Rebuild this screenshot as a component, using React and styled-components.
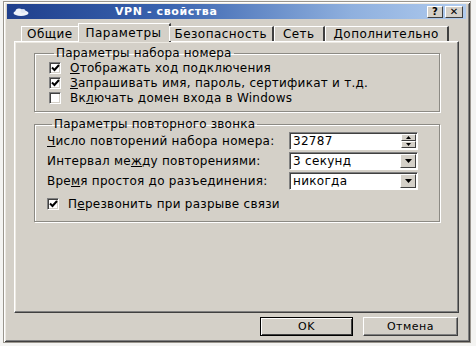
import React from "react";
import styled, { createGlobalStyle } from "styled-components";

const Global = createGlobalStyle`
  html, body { margin: 0; padding: 0; background: #f4f4f2; }
  body { font-family: "DejaVu Sans", Verdana, sans-serif; font-size: 11px; color: #000; }
`;

const Window = styled.div`
  box-sizing: border-box;
  width: 468px;
  height: 342px;
  margin: 1px 0 0 3px;
  background: #d4d0c8;
  border: 1px solid #9a968e;
  box-shadow: inset 1px 1px 0 #ffffff, inset -1px -1px 0 #404040, inset 2px 2px 0 #ece9e2, inset -2px -2px 0 #808080;
  padding: 2px 4px 0 3px;
  display: flex;
  flex-direction: column;
`;

const TitleBar = styled.div`
  height: 15px;
  display: flex;
  align-items: center;
  background: linear-gradient(to right, #1f3f8c 0%, #3a64b0 35%, #8fb0de 75%, #b0cbee 100%);
  padding: 0 3px 0 6px;
`;

const Title = styled.span`
  color: #fff;
  font-weight: bold;
  font-size: 11px;
  margin-left: 86px;
  letter-spacing: 0.6px;
  flex: 1;
`;

const CaptionButton = styled.div`
  box-sizing: border-box;
  width: ${p => p.$w || 17}px;
  height: 12px;
  margin-left: ${p => p.$ml || 0}px;
  background: #d4d0c8;
  border: 1px solid;
  border-color: #fff #404040 #404040 #fff;
  display: flex;
  align-items: center;
  justify-content: center;
  font-weight: bold;
  font-size: 10px;
  line-height: 1;
`;

const Body = styled.div`
  flex: 1;
  display: flex;
  flex-direction: column;
  padding: 4px 7px 0 7px;
`;

const TabStrip = styled.div`
  display: flex;
  align-items: flex-end;
  height: 18px;
  padding-left: 7px;
  position: relative;
  z-index: 1;
`;

const Tab = styled.div`
  box-sizing: border-box;
  height: ${p => (p.$active ? 19 : 15)}px;
  padding: 0 ${p => p.$px || 8}px;
  margin: 0 ${p => (p.$active ? -2 : 0)}px ${p => (p.$active ? -1 : 0)}px;
  background: #d4d0c8;
  border-top: 1px solid #fff;
  border-left: 1px solid #fff;
  border-right: 2px solid #404040;
  display: flex;
  align-items: center;
  font-size: 12px;
  letter-spacing: 0.45px;
  white-space: nowrap;
`;

const TabPanel = styled.div`
  box-sizing: border-box;
  height: 272px;
  border: 1px solid;
  border-color: #fff #404040 #404040 #fff;
  box-shadow: inset -1px -1px 0 #808080, inset 1px 1px 0 #ece9e2;
  padding: 4px 18px 0 19px;
  display: flex;
  flex-direction: column;
  gap: 5px;
`;

const Group = styled.fieldset`
  margin: 0;
  border: 1px solid #8c8a84;
  box-shadow: 1px 1px 0 #fff, inset 1px 1px 0 #fff;
  padding: ${p => p.$pad};
  display: flex;
  flex-direction: column;
  gap: ${p => p.$gap}px;
  min-height: ${p => p.$h}px;
  box-sizing: border-box;
`;

const Legend = styled.legend`
  padding: 0 2px;
  margin-left: 5px;
  font-size: 12px;
  letter-spacing: 0.2px;
`;

const CheckRow = styled.label`
  display: flex;
  align-items: center;
  gap: 9px;
  font-size: 12px;
  letter-spacing: 0.25px;
  height: 14px;
  margin-top: ${p => p.$mt || 0}px;
  white-space: nowrap;
`;

const Box = styled.span`
  box-sizing: border-box;
  width: 12px;
  height: 12px;
  flex: none;
  background: #fff;
  border: 1px solid;
  border-color: #808080 #fff #fff #808080;
  box-shadow: inset 1px 1px 0 #404040, inset -1px -1px 0 #d4d0c8;
  display: flex;
  align-items: center;
  justify-content: center;
`;

const FieldRow = styled.div`
  display: flex;
  align-items: center;
  justify-content: space-between;
  height: 18px;
  font-size: 12px;
  letter-spacing: 0.25px;
  white-space: nowrap;
`;

const Field = styled.div`
  box-sizing: border-box;
  width: 129px;
  height: 18px;
  background: #fff;
  border: 1px solid;
  border-color: #808080 #fff #fff #808080;
  box-shadow: inset 1px 1px 0 #404040;
  display: flex;
  align-items: center;
  padding-left: 3px;
  font-size: 12px;
  letter-spacing: 0.3px;
`;

const FieldText = styled.span`
  flex: 1;
`;

const DropButton = styled.div`
  box-sizing: border-box;
  width: 16px;
  height: 14px;
  margin-right: 1px;
  background: #d4d0c8;
  border: 1px solid;
  border-color: #fff #404040 #404040 #fff;
  display: flex;
  align-items: center;
  justify-content: center;
`;

const Spin = styled.div`
  display: flex;
  flex-direction: column;
  width: 15px;
  height: 14px;
  margin-right: 1px;
`;

const SpinHalf = styled.div`
  box-sizing: border-box;
  flex: 1;
  background: #d4d0c8;
  border: 1px solid;
  border-color: #fff #404040 #404040 #fff;
  display: flex;
  align-items: center;
  justify-content: center;
`;

const U = styled.span`
  text-decoration: underline;
  text-underline-offset: 1px;
`;

const ButtonRow = styled.div`
  display: flex;
  justify-content: flex-end;
  gap: 10px;
  padding: 4px 1px 0 0;
`;

const PushButton = styled.div`
  box-sizing: border-box;
  width: ${p => p.$w}px;
  height: 19px;
  background: #d4d0c8;
  border: 1px solid;
  border-color: ${p => (p.$def ? "#000" : "#fff #404040 #404040 #fff")};
  box-shadow: ${p => (p.$def ? "inset 1px 1px 0 #fff, inset -1px -1px 0 #404040" : "inset -1px -1px 0 #808080")};
  display: flex;
  align-items: center;
  justify-content: center;
  font-size: 11px;
  letter-spacing: 0.5px;
`;

const Check = () => (
  <svg width="9" height="8" viewBox="0 0 9 8">
    <path d="M1 3.5 L3.5 6 L8 1" fill="none" stroke="#000" strokeWidth="2" />
  </svg>
);

const Arrow = () => (
  <svg width="7" height="4" viewBox="0 0 7 4">
    <path d="M0 0 H7 L3.5 4 Z" fill="#000" />
  </svg>
);

const SmallArrow = ({ up }) => (
  <svg width="5" height="3" viewBox="0 0 5 3">
    <path d={up ? "M0 3 H5 L2.5 0 Z" : "M0 0 H5 L2.5 3 Z"} fill="#000" />
  </svg>
);

const CloudIcon = () => (
  <svg width="16" height="8" viewBox="0 0 16 8">
    <ellipse cx="8" cy="5" rx="7.5" ry="3" fill="#eef3fb" />
    <ellipse cx="6" cy="3" rx="3.5" ry="2.5" fill="#eef3fb" />
    <ellipse cx="10" cy="3" rx="2.5" ry="2" fill="#dfe7f5" />
  </svg>
);

export default function App() {
  return (
    <>
      <Global />
      <Window>
        <TitleBar>
          <CloudIcon />
          <Title>VPN - свойства</Title>
          <CaptionButton $w={16}>?</CaptionButton>
          <CaptionButton $w={18} $ml={2}>✕</CaptionButton>
        </TitleBar>
        <Body>
          <TabStrip>
            <Tab $px={5}>Общие</Tab>
            <Tab $active $px={7}>Параметры</Tab>
            <Tab $px={5}>Безопасность</Tab>
            <Tab $px={8}>Сеть</Tab>
            <Tab $px={8}>Дополнительно</Tab>
          </TabStrip>
          <TabPanel>
            <Group $pad="1px 10px 6px 14px" $gap={1} $h={66}>
              <Legend>Параметры набора номера</Legend>
              <CheckRow>
                <Box><Check /></Box>
                <span><U>О</U>тображать ход подключения</span>
              </CheckRow>
              <CheckRow>
                <Box><Check /></Box>
                <span><U>З</U>апрашивать имя, пароль, сертификат и т.д.</span>
              </CheckRow>
              <CheckRow>
                <Box />
                <span>Вк<U>л</U>ючать домен входа в Windows</span>
              </CheckRow>
            </Group>
            <Group $pad="1px 21px 8px 12px" $gap={2} $h={105}>
              <Legend>Параметры повторного звонка</Legend>
              <FieldRow>
                <span><U>Ч</U>исло повторений набора номера:</span>
                <Field>
                  <FieldText>32787</FieldText>
                  <Spin>
                    <SpinHalf><SmallArrow up /></SpinHalf>
                    <SpinHalf><SmallArrow /></SpinHalf>
                  </Spin>
                </Field>
              </FieldRow>
              <FieldRow>
                <span>Интервал ме<U>ж</U>ду повторениями:</span>
                <Field>
                  <FieldText>3 секунд</FieldText>
                  <DropButton><Arrow /></DropButton>
                </Field>
              </FieldRow>
              <FieldRow>
                <span>Вре<U>м</U>я простоя до разъединения:</span>
                <Field>
                  <FieldText>никогда</FieldText>
                  <DropButton><Arrow /></DropButton>
                </Field>
              </FieldRow>
              <CheckRow $mt={5}>
                <Box><Check /></Box>
                <span>П<U>е</U>резвонить при разрыве связи</span>
              </CheckRow>
            </Group>
          </TabPanel>
          <ButtonRow>
            <PushButton $w={93} $def>OK</PushButton>
            <PushButton $w={95}>Отмена</PushButton>
          </ButtonRow>
        </Body>
      </Window>
    </>
  );
}
